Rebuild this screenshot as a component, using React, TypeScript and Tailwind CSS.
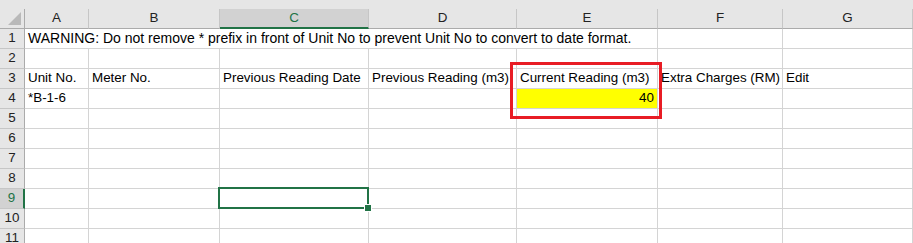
import React from "react";

const cols = ["A", "B", "C", "D", "E", "F", "G"];
const rows = [1, 2, 3, 4, 5, 6, 7, 8, 9, 10, 11];

const headers = [
  "Unit No.",
  "Meter No.",
  "Previous Reading Date",
  "Previous Reading (m3)",
  "Current Reading (m3)",
  "Extra Charges (RM)",
  "Edit",
];

const gridCols = "grid grid-cols-[25px_64px_131px_149px_148px_141px_125px_1fr]";

const RowHead = ({ n }: { n: number }) =>
  n === 9 ? (
    <div className="h-5 flex items-center justify-center bg-[#d2d2d2] border-b border-[#c6c6c6] border-r-2 border-r-[#217346] text-[#217346]">
      {n}
    </div>
  ) : (
    <div className="h-5 flex items-center justify-center bg-[#e6e6e6] border-b border-[#c6c6c6] border-r border-r-[#ababab] text-[#222]">
      {n}
    </div>
  );

const Cell = ({ children, className = "" }: { children?: React.ReactNode; className?: string }) => (
  <div className={`h-5 border-r border-b border-[#d4d4d4] flex items-center px-[3px] whitespace-nowrap ${className}`}>
    {children}
  </div>
);

export default function App() {
  return (
    <div className="relative w-[913px] h-[243px] overflow-hidden bg-white text-[13.4px] text-black font-['Liberation_Sans',Arial,sans-serif]">
      <div className="h-[9px] bg-[#e6e6e6]" />

      {/* column headers */}
      <div className={gridCols}>
        <div className="h-5 bg-[#e6e6e6] border-r border-b border-[#ababab] flex items-end justify-end pr-[3px] pb-[3px]">
          <svg width="13" height="13" viewBox="0 0 13 13">
            <polygon points="13,0 13,13 0,13" fill="#b9b9b9" />
          </svg>
        </div>
        {cols.map((c) =>
          c === "C" ? (
            <div
              key={c}
              className="h-5 flex items-center justify-center bg-[#d2d2d2] border-r border-[#c6c6c6] border-b-2 border-b-[#217346] text-[#217346]"
            >
              {c}
            </div>
          ) : (
            <div
              key={c}
              className="h-5 flex items-center justify-center bg-[#e6e6e6] border-r border-b border-r-[#c6c6c6] border-b-[#ababab] text-[#222]"
            >
              {c}
            </div>
          )
        )}
      </div>

      {rows.map((r) => (
        <div key={r} className={gridCols}>
          <RowHead n={r} />
          {r === 1 ? (
            <>
              <Cell className="col-span-5 text-[14px]">
                WARNING: Do not remove * prefix in front of Unit No to prevent Unit No to convert to date format.
              </Cell>
              <Cell />
              <Cell />
            </>
          ) : r === 3 ? (
            headers.map((h) => <Cell key={h}>{h}</Cell>)
          ) : r === 4 ? (
            <>
              <Cell>*B-1-6</Cell>
              <Cell />
              <Cell />
              <Cell />
              <Cell className="bg-[#ffff00] justify-end">40</Cell>
              <Cell />
              <Cell />
            </>
          ) : (
            cols.map((c) =>
              r === 9 && c === "C" ? (
                <div key={c} className="relative h-5 border-r border-b border-[#d4d4d4]">
                  <div className="absolute -left-[2px] -top-[2px] -right-[1px] -bottom-[1px] border-2 border-[#217346]" />
                  <div className="absolute -right-[3px] -bottom-[3px] w-[6px] h-[6px] bg-[#217346] outline outline-1 outline-white" />
                </div>
              ) : (
                <Cell key={c} />
              )
            )
          )}
        </div>
      ))}

      {/* red annotation box */}
      <div className="absolute left-[510px] top-[62px] w-[152px] h-[57px] border-[3px] border-[#e81c24]" />
    </div>
  );
}
